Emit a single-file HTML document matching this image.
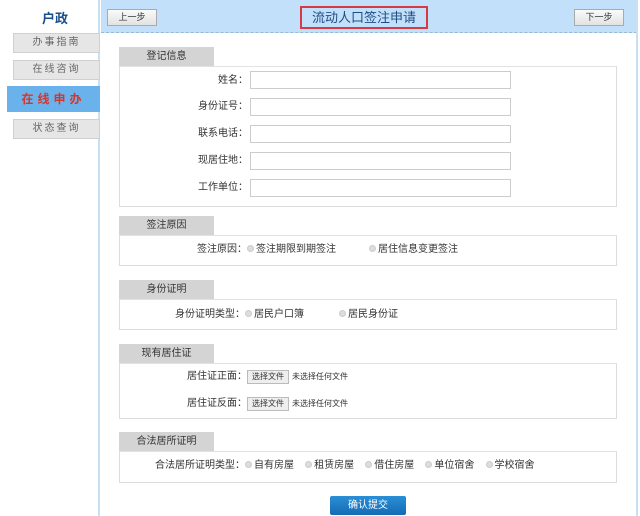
<!DOCTYPE html>
<html><head><meta charset="utf-8"><style>
*{margin:0;padding:0;box-sizing:border-box}
body{width:640px;height:516px;background:#fff;position:relative;overflow:hidden;font-family:"Liberation Sans","Noto Sans CJK SC",sans-serif;font-size:9px;color:#333}
.a{position:absolute}
.side{left:0;top:0;width:100px;height:516px;border-right:2px solid #c9dff2}
.ttl{left:0;width:110px;top:8px;text-align:center;font-size:13px;font-weight:bold;color:#1a4f8a}
.nav{left:13px;width:87px;height:20px;background:#e6e6e6;border:1px solid #d0d0d0;text-align:center;line-height:18px;color:#666;letter-spacing:2px;font-size:10px}
.act{left:7px;width:93px;height:26px;top:86px;background:#6ab2ec;color:#d8352a;font-weight:bold;font-size:12px;line-height:26px;text-align:center;letter-spacing:4px}
.hdr{left:101px;top:0;width:536px;height:33px;background:#c3e0fb;border-bottom:1px dashed #9ab8d6}
.rb{left:636px;top:0;width:2px;height:516px;background:#c9dff2}
.btn{height:17px;width:50px;background:linear-gradient(#fafafa,#e2e2e2);border:1px solid #aaa;text-align:center;line-height:15px;font-size:9px}
.title{left:300px;top:6px;width:128px;height:23px;border:2px solid #d63a45;font-size:13px;color:#1e4d84;text-align:center;line-height:19px}
.tab{left:119px;width:95px;height:20px;background:#d4d4d4;text-align:center;line-height:20px;font-size:10px;color:#333}
.box{left:119px;width:498px;border:1px solid #ddd;border-top:1px solid #e2e2e2}
.lb{width:130px;left:118px;text-align:right;font-size:10px;line-height:17px}
.in{left:250px;width:261px;height:18px;border:1px solid #ccc}
.r{font-size:10px;line-height:14px}
.r i{display:inline-block;width:7px;height:7px;border-radius:50%;background:#ddd;border:1px solid #ccc;margin-right:2px;vertical-align:0}
.fb{display:inline-block;border:1px solid #bbb;background:#eee;padding:0 4px;font-size:8px;line-height:12px;margin-right:3px}
.sub{left:330px;top:496px;width:76px;height:19px;background:linear-gradient(#2b8fd6,#146bb4);color:#fff;font-size:10px;text-align:center;line-height:19px;border-radius:2px}
</style></head><body>
<div class="a side"></div>
<div class="a ttl">户政</div>
<div class="a nav" style="top:33px">办事指南</div>
<div class="a nav" style="top:60px">在线咨询</div>
<div class="a act">在线申办</div>
<div class="a nav" style="top:119px">状态查询</div>
<div class="a hdr"></div>
<div class="a rb"></div>
<div class="a btn" style="left:107px;top:9px">上一步</div>
<div class="a btn" style="left:574px;top:9px">下一步</div>
<div class="a title">流动人口签注申请</div>

<div class="a tab" style="top:47px">登记信息</div>
<div class="a box" style="top:66px;height:141px"></div>
<div class="a lb" style="top:72px">姓名：</div><div class="a in" style="top:71px"></div>
<div class="a lb" style="top:98px">身份证号：</div><div class="a in" style="top:98px"></div>
<div class="a lb" style="top:125px">联系电话：</div><div class="a in" style="top:125px"></div>
<div class="a lb" style="top:152px">现居住地：</div><div class="a in" style="top:152px"></div>
<div class="a lb" style="top:179px">工作单位：</div><div class="a in" style="top:179px"></div>

<div class="a tab" style="top:216px">签注原因</div>
<div class="a box" style="top:235px;height:31px"></div>
<div class="a r" style="left:197px;top:243px">签注原因：<i></i>签注期限到期签注</div>
<div class="a r" style="left:369px;top:243px"><i></i>居住信息变更签注</div>

<div class="a tab" style="top:280px">身份证明</div>
<div class="a box" style="top:299px;height:31px"></div>
<div class="a r" style="left:175px;top:308px">身份证明类型：<i></i>居民户口簿</div>
<div class="a r" style="left:339px;top:308px"><i></i>居民身份证</div>

<div class="a tab" style="top:344px">现有居住证</div>
<div class="a box" style="top:363px;height:56px"></div>
<div class="a r" style="left:187px;top:370px">居住证正面：<span class="fb">选择文件</span><span style="font-size:8px">未选择任何文件</span></div>
<div class="a r" style="left:187px;top:397px">居住证反面：<span class="fb">选择文件</span><span style="font-size:8px">未选择任何文件</span></div>

<div class="a tab" style="top:432px">合法居所证明</div>
<div class="a box" style="top:451px;height:32px"></div>
<div class="a r" style="left:155px;top:459px;word-spacing:0">合法居所证明类型：<i></i>自有房屋&nbsp;&nbsp;&nbsp;&nbsp;<i></i>租赁房屋&nbsp;&nbsp;&nbsp;&nbsp;<i></i>借住房屋&nbsp;&nbsp;&nbsp;&nbsp;<i></i>单位宿舍&nbsp;&nbsp;&nbsp;&nbsp;<i></i>学校宿舍</div>

<div class="a sub">确认提交</div>
</body></html>
